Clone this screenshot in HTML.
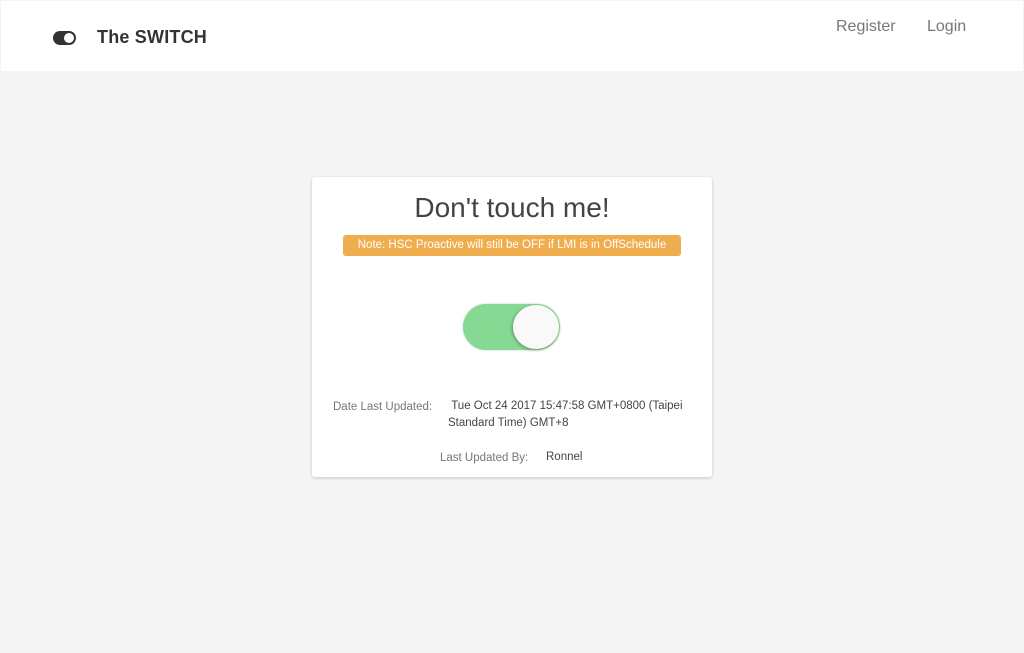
<!DOCTYPE html>
<html><head><style>
body{margin:0;width:1024px;height:653px;background:#f4f4f4;font-family:"Liberation Sans",sans-serif;position:relative;overflow:hidden}
.nav{position:absolute;left:1px;top:1px;width:1022px;height:70px;background:#fff}
.logo{position:absolute;left:52px;top:30px;width:23px;height:14px;border-radius:7px;background:#333}
.logo:after{content:"";position:absolute;right:2px;top:2px;width:10px;height:10px;border-radius:50%;background:#fff}
.brand{position:absolute;left:96px;top:26px;font-size:18px;font-weight:bold;color:#333;letter-spacing:.2px}
.nl{position:absolute;top:17px;font-size:16px;color:#777}
.card{position:absolute;left:312px;top:177px;width:400px;height:300px;background:#fff;border-radius:3px;box-shadow:0 1px 3px rgba(0,0,0,.2)}
h1{position:absolute;left:0;width:100%;top:15px;margin:0;text-align:center;font-weight:normal;font-size:28px;color:#444}
.note{position:absolute;left:31px;top:58px;width:338px;height:21px;background:#f0ad4e;border-radius:3px;color:#fff;font-size:11.5px;text-align:center;line-height:21px;white-space:nowrap;overflow:hidden}
.sw{position:absolute;left:151px;top:127px;width:97px;height:46px;border-radius:24px;background:#86d993;box-shadow:0 0 2px rgba(0,0,0,.2)}
.kn{position:absolute;right:1px;top:1px;width:46px;height:44px;border-radius:50%;background:#f9f9f9;box-shadow:-1px 1px 3px rgba(0,0,0,.3)}
.t{position:absolute;font-size:11.5px;color:#777}
.v{position:absolute;font-size:11.5px;color:#444;line-height:17px}
</style></head><body>
<div class="nav"><div class="logo"></div><div class="brand">The SWITCH</div>
<div class="nl" style="left:835px">Register</div><div class="nl" style="left:926px">Login</div></div>
<div class="card">
<h1>Don't touch me!</h1>
<div class="note">Note: HSC Proactive will still be OFF if LMI is in OffSchedule</div>
<div class="sw"><div class="kn"></div></div>
<div class="t" style="left:21px;top:224px">Date Last Updated:</div>
<div class="v" style="left:136px;top:221px;width:250px">&nbsp;Tue Oct 24 2017 15:47:58 GMT+0800 (Taipei Standard Time) GMT+8</div>
<div class="t" style="left:128px;top:275px">Last Updated By:</div>
<div class="v" style="left:234px;top:272px">Ronnel</div>
</div>
</body></html>
